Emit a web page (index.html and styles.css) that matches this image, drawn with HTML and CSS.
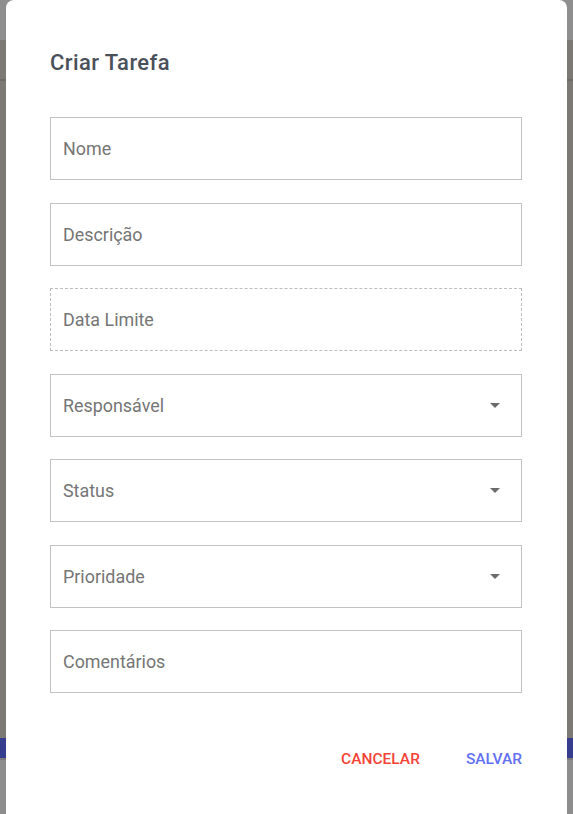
FILE: index.html
```html
<!DOCTYPE html>
<html lang="pt">
<head>
<meta charset="utf-8">
<title>Criar Tarefa</title>
<link rel="stylesheet" href="styles.css">
</head>
<body>
<div class="dialog">
  <h2 class="title">Criar Tarefa</h2>
  <div class="fields">
    <div class="field"><span class="label">Nome</span></div>
    <div class="field"><span class="label">Descrição</span></div>
    <div class="field dashed"><span class="label">Data Limite</span></div>
    <div class="field select"><span class="label">Responsável</span><span class="arrow"></span></div>
    <div class="field select"><span class="label">Status</span><span class="arrow"></span></div>
    <div class="field select"><span class="label">Prioridade</span><span class="arrow"></span></div>
    <div class="field"><span class="label">Comentários</span></div>
  </div>
  <div class="actions">
    <button class="btn cancel">CANCELAR</button>
    <button class="btn save">SALVAR</button>
  </div>
</div>
</body>
</html>
```

FILE: styles.css
```css
html, body {
  margin: 0;
  padding: 0;
  height: 100%;
  overflow: hidden;
}
body {
  font-family: Roboto, "Liberation Sans", sans-serif;
  background: linear-gradient(to bottom,
    #8e8e8e 0, #8e8e8e 40px,
    #7c7974 40px, #7c7974 79px,
    #6c6b69 79px, #6c6b69 81px,
    #7c7974 81px, #7c7974 738px,
    #363c8e 738px, #363c8e 758px,
    #7a7a7a 758px, #7a7a7a 760px,
    #8d8d8d 760px, #8d8d8d 100%);
}
.dialog {
  margin-left: 6px;
  width: 561px;
  height: 830px;
  box-sizing: border-box;
  background: #ffffff;
  border-radius: 8px;
  padding: 0 45px 0 44px;
}
.title {
  margin: 0;
  padding-top: 48px;
  font-size: 22px;
  line-height: 30px;
  letter-spacing: 0.4px;
  font-weight: 500;
  color: #4a5059;
}
.fields {
  display: flex;
  flex-direction: column;
  gap: 22.5px;
  margin-top: 39px;
}
.field {
  height: 63px;
  box-sizing: border-box;
  border: 1px solid #c2c2c2;
  display: flex;
  align-items: center;
  justify-content: space-between;
  padding: 0 21px 0 12px;
}
.field.dashed {
  border: 1px dashed #bdbdbd;
}
.label {
  font-size: 17.9px;
  color: #757575;
}
.arrow {
  width: 0;
  height: 0;
  border-left: 5px solid transparent;
  border-right: 5px solid transparent;
  border-top: 5px solid #6b6b6b;
}
.actions {
  display: flex;
  justify-content: flex-end;
  gap: 46px;
  margin-top: 55px;
}
.btn {
  background: none;
  border: none;
  padding: 0;
  font-family: Roboto, "Liberation Sans", sans-serif;
  font-size: 15.5px;
  font-weight: 500;
  line-height: 22px;
  cursor: pointer;
}
.cancel { color: #f44336; }
.save { color: #6370f2; }
```
